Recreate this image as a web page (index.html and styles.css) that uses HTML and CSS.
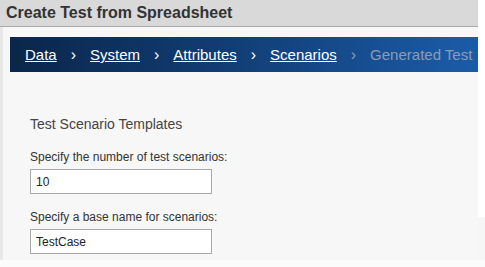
FILE: index.html
```html
<!DOCTYPE html>
<html lang="en">
  <head>
    <meta charset="UTF-8" />
    <title>Create Test from Spreadsheet</title>
    <link rel="stylesheet" href="styles.css">
  </head>
  <body>
    <div class="page">
      <div class="window">
        <div class="titlebar">Create Test from Spreadsheet</div>
        <div class="content">
          <nav class="steps">
            <a href="#" class="step">Data</a>
            <span class="sep">&rsaquo;</span>
            <a href="#" class="step">System</a>
            <span class="sep">&rsaquo;</span>
            <a href="#" class="step">Attributes</a>
            <span class="sep">&rsaquo;</span>
            <a href="#" class="step">Scenarios</a>
            <span class="sep dim">&rsaquo;</span>
            <span class="step current">Generated Test</span>
          </nav>

          <form class="form">
            <h3>Test Scenario Templates</h3>

            <label for="nb_scenarios">Specify the number of test scenarios:</label>
            <input type="text" id="nb_scenarios" name="nb_scenarios" value="10" />

            <label for="base_name">Specify a base name for scenarios:</label>
            <input type="text" id="base_name" name="base_name" value="TestCase" />
          </form>
        </div>
      </div>
      <div class="side">
        <div class="side-top"></div>
      </div>
    </div>
  </body>
</html>
```

FILE: styles.css
```css
body {
  font-family: "Liberation Sans", Arial, sans-serif;
  margin: 0;
  background-color: #fbfbfb;
}
.page {
  display: flex;
}
.window {
  width: 478px;
}
.side {
  width: 7px;
  background-color: #f6f6f6;
}
.side-top {
  height: 217px;
  background-color: #ffffff;
}
.titlebar {
  height: 26px;
  line-height: 26px;
  padding-left: 6px;
  background-color: #d9d9d9;
  border-bottom: 1px solid #a9a9a9;
  color: #333333;
  font-weight: bold;
  font-size: 16px;
}
.content {
  height: 223px;
  padding: 10px 0 0 7px;
  background-color: #f7f7f7;
  border-left: 3px solid #e8e8e8;
}
.steps {
  display: flex;
  align-items: center;
  height: 35px;
  padding-left: 15px;
  background: linear-gradient(to right, #0a264a, #123f78 50%, #1b5ca8);
  font-size: 15px;
  white-space: nowrap;
}
.step {
  color: #ffffff;
}
.sep {
  color: #ffffff;
  margin: 0 14px;
  font-size: 16px;
}
.sep.dim,
.step.current {
  color: #8c9cb4;
}
.form {
  padding: 44px 0 0 20px;
}
h3 {
  margin: 0 0 18px;
  font-weight: normal;
  font-size: 14px;
  line-height: 16px;
  color: #444444;
}
label {
  display: block;
  font-size: 12px;
  line-height: 14px;
  color: #333333;
  margin-bottom: 5px;
}
input {
  display: block;
  width: 182px;
  height: 25px;
  padding: 0 5px;
  margin-bottom: 16px;
  border: 1px solid #a9a9a9;
  box-sizing: border-box;
  font-family: "Liberation Sans", Arial, sans-serif;
  font-size: 12px;
  color: #222222;
  background-color: #ffffff;
}
```
